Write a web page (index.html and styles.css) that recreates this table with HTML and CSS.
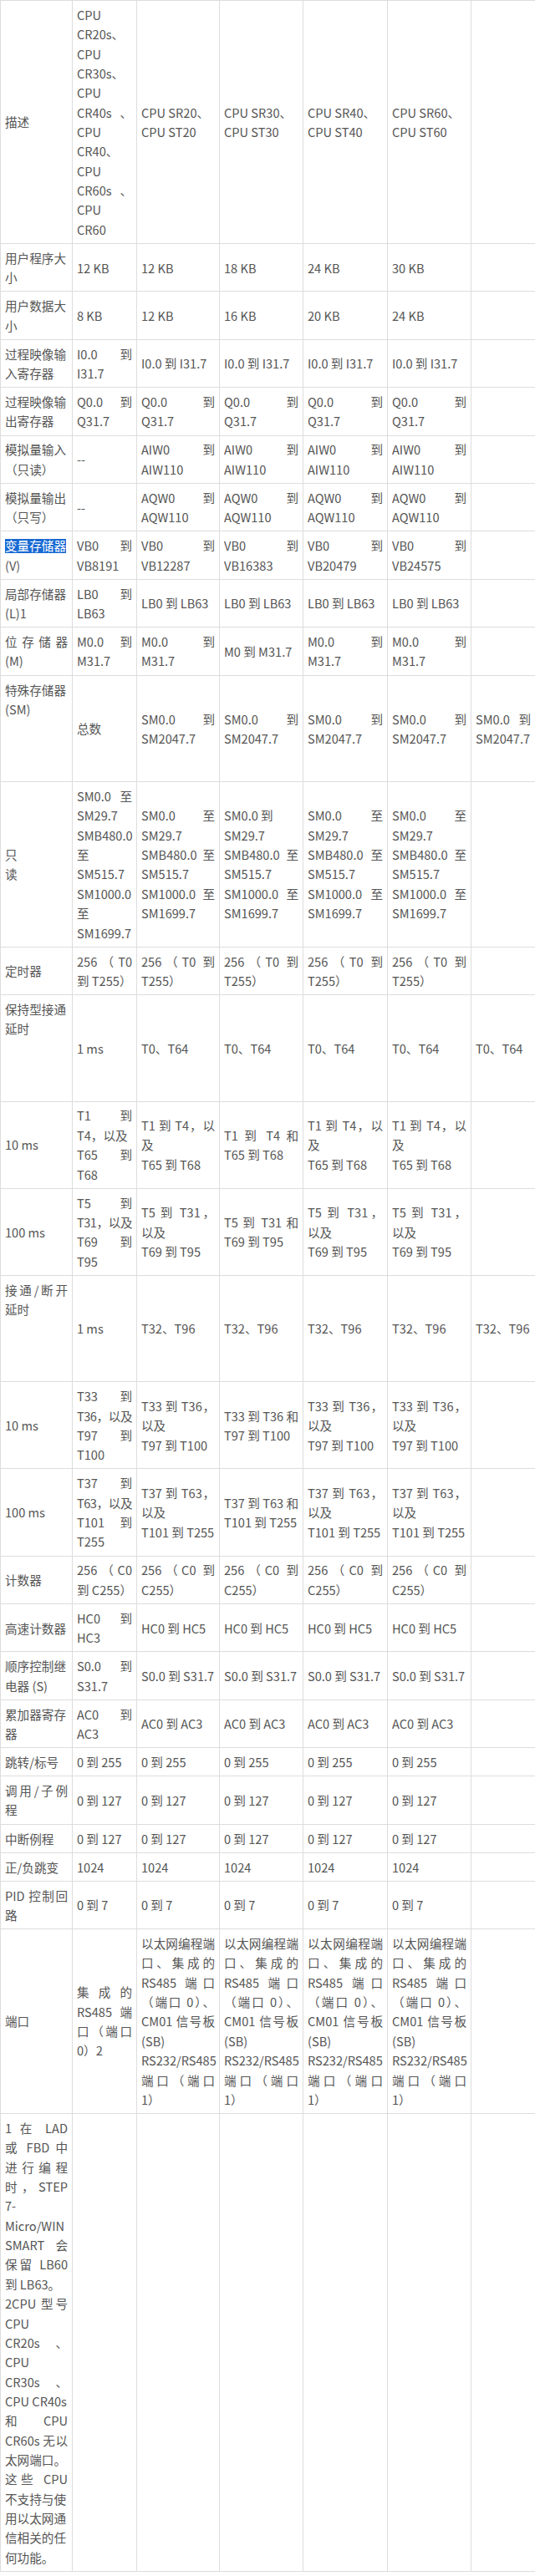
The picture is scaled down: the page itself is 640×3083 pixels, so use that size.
FILE: index.html
```html
<!DOCTYPE html>
<html lang="zh-CN">
<head>
<meta charset="utf-8">
<title>CPU 存储器范围</title>
<link rel="stylesheet" href="styles.css">
</head>
<body>
<table class="spec">
<colgroup>
<col class="w1"><col class="w2"><col class="w3"><col class="w4"><col class="w5"><col class="w6"><col class="w7">
</colgroup>
<tbody>
<tr>
<td>描述</td>
<td>CPU<br>CR20s、<br>CPU<br>CR30s、<br>CPU<span class="j">CR40s 、</span>CPU<br>CR40、<br>CPU<span class="j">CR60s 、</span>CPU<br>CR60</td>
<td>CPU SR20、<br>CPU ST20</td>
<td>CPU SR30、<br>CPU ST30</td>
<td>CPU SR40、<br>CPU ST40</td>
<td>CPU SR60、<br>CPU ST60</td>
<td></td>
</tr>
<tr>
<td>用户程序大<br>小</td>
<td>12 KB</td><td>12 KB</td><td>18 KB</td><td>24 KB</td><td>30 KB</td><td></td>
</tr>
<tr>
<td>用户数据大<br>小</td>
<td>8 KB</td><td>12 KB</td><td>16 KB</td><td>20 KB</td><td>24 KB</td><td></td>
</tr>
<tr>
<td>过程映像输<br>入寄存器</td>
<td><span class="j">I0.0 到</span>I31.7</td>
<td>I0.0 到 I31.7</td><td>I0.0 到 I31.7</td><td>I0.0 到 I31.7</td><td>I0.0 到 I31.7</td><td></td>
</tr>
<tr>
<td>过程映像输<br>出寄存器</td>
<td><span class="j">Q0.0 到</span>Q31.7</td>
<td><span class="j">Q0.0 到</span>Q31.7</td>
<td><span class="j">Q0.0 到</span>Q31.7</td>
<td><span class="j">Q0.0 到</span>Q31.7</td>
<td><span class="j">Q0.0 到</span>Q31.7</td>
<td></td>
</tr>
<tr>
<td>模拟量输入<br>（只读）</td>
<td>--</td>
<td><span class="j">AIW0 到</span>AIW110</td>
<td><span class="j">AIW0 到</span>AIW110</td>
<td><span class="j">AIW0 到</span>AIW110</td>
<td><span class="j">AIW0 到</span>AIW110</td>
<td></td>
</tr>
<tr>
<td>模拟量输出<br>（只写）</td>
<td>--</td>
<td><span class="j">AQW0 到</span>AQW110</td>
<td><span class="j">AQW0 到</span>AQW110</td>
<td><span class="j">AQW0 到</span>AQW110</td>
<td><span class="j">AQW0 到</span>AQW110</td>
<td></td>
</tr>
<tr>
<td><span class="sel">变量存储器</span><br>(V)</td>
<td><span class="j">VB0 到</span>VB8191</td>
<td><span class="j">VB0 到</span>VB12287</td>
<td><span class="j">VB0 到</span>VB16383</td>
<td><span class="j">VB0 到</span>VB20479</td>
<td><span class="j">VB0 到</span>VB24575</td>
<td></td>
</tr>
<tr>
<td>局部存储器<br>(L)1</td>
<td><span class="j">LB0 到</span>LB63</td>
<td>LB0 到 LB63</td><td>LB0 到 LB63</td><td>LB0 到 LB63</td><td>LB0 到 LB63</td><td></td>
</tr>
<tr>
<td><span class="j">位存储器</span>(M)</td>
<td><span class="j">M0.0 到</span>M31.7</td>
<td><span class="j">M0.0 到</span>M31.7</td>
<td>M0 到 M31.7</td>
<td><span class="j">M0.0 到</span>M31.7</td>
<td><span class="j">M0.0 到</span>M31.7</td>
<td></td>
</tr>
<tr>
<td class="top"><div class="tall">特殊存储器<br>(SM)</div></td>
<td>总数</td>
<td><span class="j">SM0.0 到</span>SM2047.7</td>
<td><span class="j">SM0.0 到</span>SM2047.7</td>
<td><span class="j">SM0.0 到</span>SM2047.7</td>
<td><span class="j">SM0.0 到</span>SM2047.7</td>
<td><span class="j">SM0.0 到</span>SM2047.7</td>
</tr>
<tr>
<td>只<br>读</td>
<td><span class="j">SM0.0 至</span>SM29.7<br>SMB480.0<br>至<br>SM515.7<br>SM1000.0<br>至<br>SM1699.7</td>
<td><span class="j">SM0.0 至</span>SM29.7<span class="j">SMB480.0 至</span>SM515.7<span class="j">SM1000.0 至</span>SM1699.7</td>
<td>SM0.0 到<br>SM29.7<span class="j">SMB480.0 至</span>SM515.7<span class="j">SM1000.0 至</span>SM1699.7</td>
<td><span class="j">SM0.0 至</span>SM29.7<span class="j">SMB480.0 至</span>SM515.7<span class="j">SM1000.0 至</span>SM1699.7</td>
<td><span class="j">SM0.0 至</span>SM29.7<span class="j">SMB480.0 至</span>SM515.7<span class="j">SM1000.0 至</span>SM1699.7</td>
<td></td>
</tr>
<tr>
<td>定时器</td>
<td><span class="j">256（T0</span>到 T255）</td>
<td><span class="j">256（T0 到</span>T255）</td>
<td><span class="j">256（T0 到</span>T255）</td>
<td><span class="j">256（T0 到</span>T255）</td>
<td><span class="j">256（T0 到</span>T255）</td>
<td></td>
</tr>
<tr>
<td class="top"><div class="tall">保持型接通<br>延时</div></td>
<td>1 ms</td>
<td>T0、T64</td><td>T0、T64</td><td>T0、T64</td><td>T0、T64</td><td>T0、T64</td>
</tr>
<tr>
<td>10 ms</td>
<td><span class="j">T1 到</span>T4，以及<span class="j">T65 到</span>T68</td>
<td><span class="j">T1 到 T4，以</span>及<br>T65 到 T68</td>
<td><span class="j">T1 到 T4 和</span>T65 到 T68</td>
<td><span class="j">T1 到 T4，以</span>及<br>T65 到 T68</td>
<td><span class="j">T1 到 T4，以</span>及<br>T65 到 T68</td>
<td></td>
</tr>
<tr>
<td>100 ms</td>
<td><span class="j">T5 到</span><span class="j t">T31，以及</span><span class="j">T69 到</span>T95</td>
<td><span class="j">T5 到 T31，</span>以及<br>T69 到 T95</td>
<td><span class="j">T5 到 T31 和</span>T69 到 T95</td>
<td><span class="j">T5 到 T31，</span>以及<br>T69 到 T95</td>
<td><span class="j">T5 到 T31，</span>以及<br>T69 到 T95</td>
<td></td>
</tr>
<tr>
<td class="top"><div class="tall"><span class="j">接通/断开</span>延时</div></td>
<td>1 ms</td>
<td>T32、T96</td><td>T32、T96</td><td>T32、T96</td><td>T32、T96</td><td>T32、T96</td>
</tr>
<tr>
<td>10 ms</td>
<td><span class="j">T33 到</span><span class="j t">T36，以及</span><span class="j">T97 到</span>T100</td>
<td><span class="j">T33 到 T36，</span>以及<br>T97 到 T100</td>
<td><span class="j">T33 到 T36 和</span>T97 到 T100</td>
<td><span class="j">T33 到 T36，</span>以及<br>T97 到 T100</td>
<td><span class="j">T33 到 T36，</span>以及<br>T97 到 T100</td>
<td></td>
</tr>
<tr>
<td>100 ms</td>
<td><span class="j">T37 到</span><span class="j t">T63，以及</span><span class="j">T101 到</span>T255</td>
<td><span class="j">T37 到 T63，</span>以及<br>T101 到 T255</td>
<td><span class="j">T37 到 T63 和</span>T101 到 T255</td>
<td><span class="j">T37 到 T63，</span>以及<br>T101 到 T255</td>
<td><span class="j">T37 到 T63，</span>以及<br>T101 到 T255</td>
<td></td>
</tr>
<tr>
<td>计数器</td>
<td><span class="j">256（C0</span>到 C255）</td>
<td><span class="j">256（C0 到</span>C255）</td>
<td><span class="j">256（C0 到</span>C255）</td>
<td><span class="j">256（C0 到</span>C255）</td>
<td><span class="j">256（C0 到</span>C255）</td>
<td></td>
</tr>
<tr>
<td>高速计数器</td>
<td><span class="j">HC0 到</span>HC3</td>
<td>HC0 到 HC5</td><td>HC0 到 HC5</td><td>HC0 到 HC5</td><td>HC0 到 HC5</td><td></td>
</tr>
<tr>
<td>顺序控制继<br>电器 (S)</td>
<td><span class="j">S0.0 到</span>S31.7</td>
<td>S0.0 到 S31.7</td><td>S0.0 到 S31.7</td><td>S0.0 到 S31.7</td><td>S0.0 到 S31.7</td><td></td>
</tr>
<tr>
<td>累加器寄存<br>器</td>
<td><span class="j">AC0 到</span>AC3</td>
<td>AC0 到 AC3</td><td>AC0 到 AC3</td><td>AC0 到 AC3</td><td>AC0 到 AC3</td><td></td>
</tr>
<tr>
<td>跳转/标号</td>
<td>0 到 255</td><td>0 到 255</td><td>0 到 255</td><td>0 到 255</td><td>0 到 255</td><td></td>
</tr>
<tr>
<td><span class="j">调用/子例</span>程</td>
<td>0 到 127</td><td>0 到 127</td><td>0 到 127</td><td>0 到 127</td><td>0 到 127</td><td></td>
</tr>
<tr>
<td>中断例程</td>
<td>0 到 127</td><td>0 到 127</td><td>0 到 127</td><td>0 到 127</td><td>0 到 127</td><td></td>
</tr>
<tr>
<td>正/负跳变</td>
<td>1024</td><td>1024</td><td>1024</td><td>1024</td><td>1024</td><td></td>
</tr>
<tr>
<td><span class="j">PID 控制回</span>路</td>
<td>0 到 7</td><td>0 到 7</td><td>0 到 7</td><td>0 到 7</td><td>0 到 7</td><td></td>
</tr>
<tr>
<td>端口</td>
<td><span class="j">集成的</span><span class="j">RS485 端</span><span class="j">口（端口</span>0）2</td>
<td><span class="j">以太网编程端</span><span class="j">口、集成的</span><span class="j">RS485 端口</span><span class="j">（端口 0）、</span><span class="j">CM01 信号板</span>(SB)<br>RS232/RS485<span class="j">端口（端口</span>1）</td>
<td><span class="j">以太网编程端</span><span class="j">口、集成的</span><span class="j">RS485 端口</span><span class="j">（端口 0）、</span><span class="j">CM01 信号板</span>(SB)<br>RS232/RS485<span class="j">端口（端口</span>1）</td>
<td><span class="j">以太网编程端</span><span class="j">口、集成的</span><span class="j">RS485 端口</span><span class="j">（端口 0）、</span><span class="j">CM01 信号板</span>(SB)<br>RS232/RS485<span class="j">端口（端口</span>1）</td>
<td><span class="j">以太网编程端</span><span class="j">口、集成的</span><span class="j">RS485 端口</span><span class="j">（端口 0）、</span><span class="j">CM01 信号板</span>(SB)<br>RS232/RS485<span class="j">端口（端口</span>1）</td>
<td></td>
</tr>
<tr>
<td><span class="j">1 在 LAD</span><span class="j">或 FBD 中</span><span class="j">进行编程</span><span class="j">时，STEP</span>7-<br>Micro/WIN<span class="j">SMART 会</span><span class="j">保留 LB60</span>到 LB63。<span class="j">2CPU 型号</span>CPU<span class="j">CR20s 、</span>CPU<span class="j">CR30s 、</span>CPU CR40s<span class="j">和 CPU</span><span class="j">CR60s 无以</span>太网端口。<span class="j">这些 CPU</span>不支持与使<br>用以太网通<br>信相关的任<br>何功能。</td>
<td></td><td></td><td></td><td></td><td></td><td></td>
</tr>
</tbody>
</table>
</body>
</html>
```

FILE: styles.css
```css
html, body {
  margin: 0;
  padding: 0;
  background: #ffffff;
}

body {
  overflow-x: hidden;
  font-family: "Noto Sans CJK SC", "Noto Sans", sans-serif;
  font-size: 14.6px;
  line-height: 23.36px;
  color: #555555;
  text-autospace: no-autospace;
}

.spec {
  border-collapse: collapse;
  table-layout: fixed;
  width: 641px;
}

.w1 { width: 86px; }
.w2 { width: 77px; }
.w3 { width: 99px; }
.w4 { width: 100px; }
.w5 { width: 101px; }
.w6 { width: 100px; }
.w7 { width: 77px; }

.spec td {
  border: 1px solid #dddddd;
  padding: 4.85px 5px;
  vertical-align: middle;
  text-align: justify;
  word-break: normal;
}

.spec td.top {
  vertical-align: top;
}

.tall {
  height: 116.8px;
}

.j {
  display: block;
  text-align: justify;
  text-align-last: justify;
}

.t {
  letter-spacing: -0.5px;
}

.sel {
  display: inline-block;
  line-height: 16.5px;
  background: #1769d3;
  color: #ffffff;
}
```
